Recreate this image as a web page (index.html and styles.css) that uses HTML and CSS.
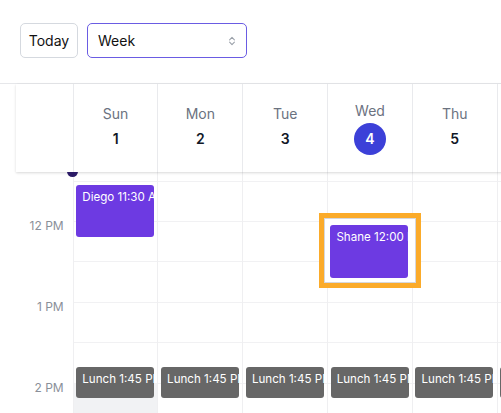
FILE: index.html
```html
<!DOCTYPE html>
<html lang="en">
<head>
<meta charset="utf-8">
<title>Week calendar</title>
<link rel="stylesheet" href="styles.css">
</head>
<body>
<div class="app">
  <div class="toolbar">
    <button class="btn-today">Today</button>
    <div class="select">
      <span class="select-value">Week</span>
      <svg class="chev" width="8" height="12" viewBox="0 0 8 12" aria-hidden="true">
        <path d="M1.6 4.8 L4 2.4 L6.4 4.8" fill="none" stroke="#9aa0a9" stroke-width="1.1" stroke-linecap="round" stroke-linejoin="round"/>
        <path d="M1.6 7.2 L4 9.6 L6.4 7.2" fill="none" stroke="#9aa0a9" stroke-width="1.1" stroke-linecap="round" stroke-linejoin="round"/>
      </svg>
    </div>
  </div>

  <div class="calendar">
    <div class="cal-head">
      <div class="gutter-head"></div>
      <div class="day-head"><span class="dname">Sun</span><span class="dnum">1</span></div>
      <div class="day-head"><span class="dname">Mon</span><span class="dnum">2</span></div>
      <div class="day-head"><span class="dname">Tue</span><span class="dnum">3</span></div>
      <div class="day-head"><span class="dname">Wed</span><span class="dnum today">4</span></div>
      <div class="day-head"><span class="dname">Thu</span><span class="dnum">5</span></div>
      <div class="day-head"><span class="dname">Fri</span><span class="dnum">6</span></div>
      <div class="day-head"><span class="dname">Sat</span><span class="dnum">7</span></div>
    </div>

    <div class="cal-body">
      <div class="now-dot"></div>
      <div class="body-inner">
        <div class="gutter">
          <div class="gslot"><span class="tlabel">11 AM</span></div>
          <div class="gslot"></div>
          <div class="gslot"><span class="tlabel">12 PM</span></div>
          <div class="gslot"></div>
          <div class="gslot"><span class="tlabel">1 PM</span></div>
          <div class="gslot"></div>
          <div class="gslot"><span class="tlabel">2 PM</span></div>
          <div class="gslot"></div>
        </div>

        <div class="day">
          <div class="slot"></div><div class="slot"></div><div class="slot"></div><div class="slot"></div>
          <div class="slot"></div><div class="slot"></div><div class="slot shaded"></div><div class="slot shaded"></div>
          <div class="event purple" style="top:45px;height:52px">Diego 11:30 AM</div>
          <div class="event gray" style="top:226.4px;height:31.6px">Lunch 1:45 PM</div>
        </div>

        <div class="day">
          <div class="slot"></div><div class="slot"></div><div class="slot"></div><div class="slot"></div>
          <div class="slot"></div><div class="slot"></div><div class="slot"></div><div class="slot"></div>
          <div class="event gray" style="top:226.4px;height:31.6px">Lunch 1:45 PM</div>
        </div>

        <div class="day">
          <div class="slot"></div><div class="slot"></div><div class="slot"></div><div class="slot"></div>
          <div class="slot"></div><div class="slot"></div><div class="slot"></div><div class="slot"></div>
          <div class="event gray" style="top:226.4px;height:31.6px">Lunch 1:45 PM</div>
        </div>

        <div class="day">
          <div class="slot"></div><div class="slot"></div><div class="slot"></div><div class="slot"></div>
          <div class="slot"></div><div class="slot"></div><div class="slot"></div><div class="slot"></div>
          <div class="focus-ring" style="top:72.4px">
            <div class="event purple in-ring">Shane 12:00 PM</div>
          </div>
          <div class="event gray" style="top:226.4px;height:31.6px">Lunch 1:45 PM</div>
        </div>

        <div class="day">
          <div class="slot"></div><div class="slot"></div><div class="slot"></div><div class="slot"></div>
          <div class="slot"></div><div class="slot"></div><div class="slot"></div><div class="slot"></div>
          <div class="event gray" style="top:226.4px;height:31.6px">Lunch 1:45 PM</div>
        </div>

        <div class="day">
          <div class="slot"></div><div class="slot"></div><div class="slot"></div><div class="slot"></div>
          <div class="slot"></div><div class="slot"></div><div class="slot"></div><div class="slot"></div>
          <div class="event gray" style="top:226.4px;height:31.6px">Lunch 1:45 PM</div>
        </div>

        <div class="day">
          <div class="slot"></div><div class="slot"></div><div class="slot"></div><div class="slot"></div>
          <div class="slot"></div><div class="slot"></div><div class="slot"></div><div class="slot"></div>
        </div>
      </div>
    </div>
  </div>
</div>
</body>
</html>
```

FILE: styles.css
```css
* { box-sizing: border-box; }

html, body {
  margin: 0;
  padding: 0;
  background: #ffffff;
  overflow: hidden;
}

body {
  font-family: "Inter", "Liberation Sans", sans-serif;
  color: #111827;
}

.app {
  width: 501px;
  height: 413px;
  overflow: hidden;
}

/* Toolbar */
.toolbar {
  height: 83px;
  padding: 23px 20px 0 20px;
  display: flex;
  align-items: flex-start;
  gap: 9px;
}

.btn-today {
  width: 58px;
  height: 35px;
  border: 1px solid #d5d9df;
  border-radius: 5px;
  background: #ffffff;
  font-family: inherit;
  font-size: 14px;
  color: #111111;
  padding: 0;
  margin: 0;
}

.select {
  width: 160px;
  height: 35px;
  border: 1.3px solid #6a5ce3;
  border-radius: 5px;
  display: flex;
  align-items: center;
  justify-content: space-between;
  padding: 0 10px 0 10px;
  font-size: 14px;
  color: #111111;
}

.chev { display: block; }

/* Calendar */
.calendar {
  border-top: 1px solid #e6e7ea;
  width: 700px;
}

.cal-head {
  position: relative;
  z-index: 2;
  margin-left: 16px;
  height: 88px;
  display: flex;
  background: #ffffff;
  box-shadow: 0 1px 3px rgba(0, 0, 0, 0.10), 0 1px 2px rgba(0, 0, 0, 0.06);
}

.gutter-head {
  width: 56.7px;
  flex: none;
}

.day-head {
  width: 84.8px;
  flex: none;
  border-left: 1px solid #e9eaed;
  display: flex;
  flex-direction: column;
  align-items: center;
  justify-content: center;
  gap: 2px;
}

.dname {
  font-size: 14px;
  line-height: 20px;
  color: #6b7280;
}

.dnum {
  font-size: 14px;
  line-height: 26px;
  font-weight: 600;
  color: #111827;
}

.dnum.today {
  width: 32px;
  height: 32px;
  line-height: 32px;
  border-radius: 50%;
  background: #3c40d8;
  color: #ffffff;
  text-align: center;
}

.cal-body {
  position: relative;
  margin-left: 16px;
  height: 241px;
  overflow: hidden;
}

.now-dot {
  position: absolute;
  left: 51.2px;
  top: -6px;
  width: 11px;
  height: 11px;
  border-radius: 50%;
  background: #2b1a66;
  z-index: 3;
}

.body-inner {
  display: flex;
  margin-top: -31.7px;
}

.gutter {
  width: 56.7px;
  flex: none;
}

.gslot {
  height: 40.4px;
  text-align: right;
  padding-right: 9px;
}

.tlabel {
  display: inline-block;
  font-size: 12px;
  line-height: 14px;
  color: #8a8f99;
  transform: translateY(-50%);
}

.day {
  position: relative;
  width: 84.8px;
  flex: none;
  border-left: 1px solid #efeff1;
}

.slot {
  height: 40.4px;
  border-top: 1px solid #f1f1f3;
}

.slot.shaded {
  background: #f1f2f4;
}

.event {
  position: absolute;
  left: 2.6px;
  width: 78px;
  border-radius: 3px;
  padding: 5px 6px;
  font-size: 11.6px;
  line-height: 15px;
  color: #ffffff;
  white-space: nowrap;
  overflow: hidden;
}

.event.purple { background: #6d3ae2; }
.event.gray { background: #676767; }

.focus-ring {
  position: absolute;
  z-index: 1;
  left: -8.7px;
  width: 101.7px;
  height: 75px;
  border: 5px solid #fbab2a;
  background: #ffffff;
  box-shadow: inset 0 0 0 1px #d6d7db;
}

.event.in-ring {
  position: static;
  margin: 7.3px 0 0 6px;
  height: 52.7px;
}
```
